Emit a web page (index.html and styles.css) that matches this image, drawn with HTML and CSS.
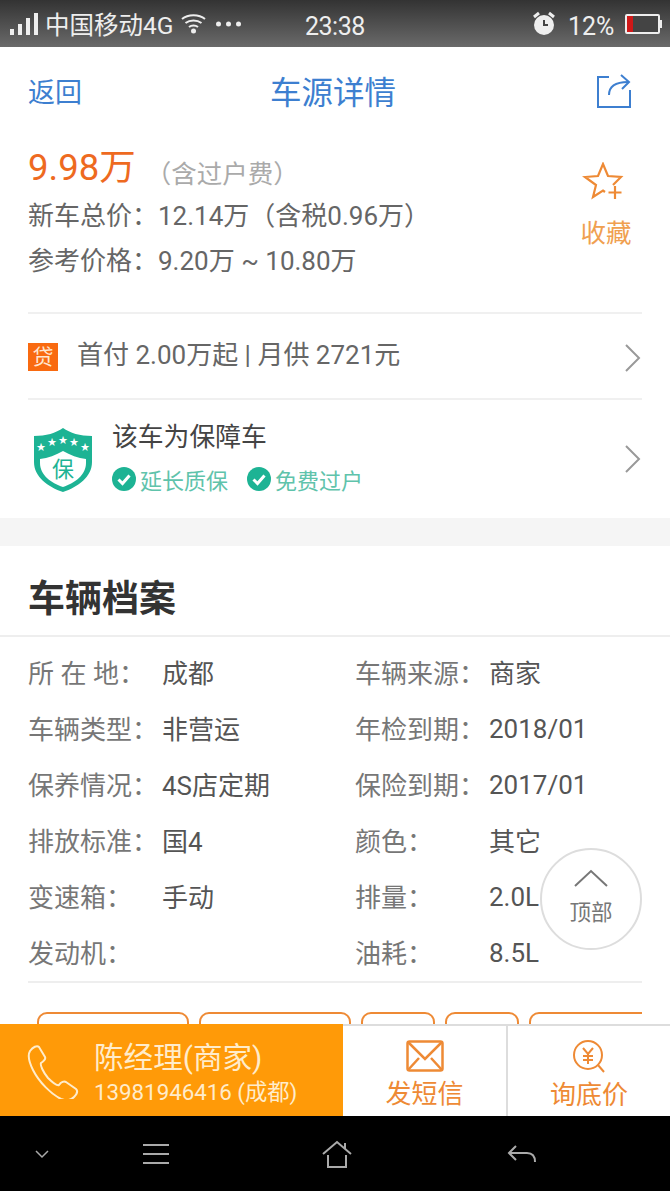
FILE: index.html
```html
<!DOCTYPE html>
<html lang="zh-CN">
<head>
    <meta charset="UTF-8">
    <meta name="viewport" content="width=device-width, initial-scale=1.0">
    <title>车源详情</title>
    <link rel="stylesheet" href="styles.css">
</head>
<body>
    <div class="screen">
        <div class="status-bar">
            <div class="status-left">
                <svg width="28" height="22" viewBox="0 0 28 22"><g fill="#eee"><rect x="0" y="16" width="4" height="6"/><rect x="8" y="11" width="4" height="11"/><rect x="16" y="5" width="4" height="17"/><rect x="24" y="0" width="4" height="22"/></g></svg>
                <span class="carrier">中国移动4G</span>
                <svg class="wifi" width="25" height="21" viewBox="0 0 25 21" fill="none" stroke="#eee" stroke-width="2"><path d="M1 6c6-5 17-5 23 0"/><path d="M4.500 10c4.500-3.500 11.500-3.500 16 0"/><path d="M8 14c2.500-2 6.500-2 9 0"/><circle cx="12.500" cy="18" r="2.500" fill="#eee" stroke="none"/></svg>
                <svg class="dots" width="25" height="6" viewBox="0 0 25 6" fill="#eee"><circle cx="2.500" cy="3" r="2.500"/><circle cx="12.500" cy="3" r="2.500"/><circle cx="22.500" cy="3" r="2.500"/></svg>
            </div>
            <span class="clock">23:38</span>
            <div class="status-right">
                <svg width="26" height="26" viewBox="0 0 26 26"><circle cx="13" cy="14" r="10" fill="#eee"/><path d="M3 6l5-4M23 6l-5-4" stroke="#eee" stroke-width="3"/><path d="M13 9v5h4" fill="none" stroke="#444" stroke-width="2"/></svg>
                <span class="battery-text">12%</span>
                <div class="battery"><div class="battery-level"></div></div>
            </div>
        </div>

        <div class="nav-bar">
            <span class="nav-back">返回</span>
            <span class="nav-title">车源详情</span>
            <svg class="nav-share" width="36" height="36" viewBox="0 0 36 36" fill="none" stroke="#3d7fd0" stroke-width="2"><path d="M13 4H2v30h32V17"/><path d="M13 22c0-8 6-13 19-13"/><path d="M25 2l8 7-7 7"/></svg>
        </div>

        <div class="price-box">
            <div class="price-info">
                <div class="price-main"><span class="price-num">9.98万</span><span class="price-note">（含过户费）</span></div>
                <div class="price-line">新车总价：12.14万（含税0.96万）</div>
                <div class="price-line">参考价格：9.20万 ~ 10.80万</div>
            </div>
            <div class="fav">
                <svg width="42" height="42" viewBox="0 0 42 42" fill="none" stroke="#ee8a35" stroke-width="2.200"><path d="M23 30l-2-1.500-10 6.500 3-12L3 15l13-1 5-12 5 12 13 1-8 8"/><path d="M33 24v13M26.500 30.500h13"/></svg>
                <span>收藏</span>
            </div>
        </div>

        <div class="list-row loan-row">
            <span class="loan-tag">贷</span>
            <span class="loan-text">首付 2.00万起 | 月供 2721元</span>
            <svg class="chevron" width="18" height="30" viewBox="0 0 18 30" fill="none" stroke="#999" stroke-width="2"><path d="M2 2l13 13L2 28"/></svg>
        </div>

        <div class="list-row guarantee-row">
            <svg class="shield" width="62" height="66" viewBox="0 0 62 66">
                <path d="M31 1C24 6 14 9 2 9v26c0 15 14 25 29 30 15-5 29-15 29-30V9C48 9 38 6 31 1z" fill="#1db394"/>
                <path d="M31 24c7 4 15 7 23 8v4c0 12-11 20-23 24C19 56 8 48 8 36v-4c8-1 16-4 23-8z" fill="#fff"/>
                <g fill="#fff" font-size="9" text-anchor="middle"><text x="9" y="23">★</text><text x="20" y="18">★</text><text x="31" y="16">★</text><text x="42" y="18">★</text><text x="53" y="23">★</text></g>
                <text class="shield-text" x="31" y="50" text-anchor="middle">保</text>
            </svg>
            <div class="guarantee-info">
                <div class="guarantee-title">该车为保障车</div>
                <div class="guarantee-items">
                    <span class="check-item"><svg width="24" height="24" viewBox="0 0 24 24"><circle cx="12" cy="12" r="12" fill="#1db394"/><path d="M6.500 12.500l4 4 7-8" fill="none" stroke="#fff" stroke-width="3"/></svg>延长质保</span>
                    <span class="check-item"><svg width="24" height="24" viewBox="0 0 24 24"><circle cx="12" cy="12" r="12" fill="#1db394"/><path d="M6.500 12.500l4 4 7-8" fill="none" stroke="#fff" stroke-width="3"/></svg>免费过户</span>
                </div>
            </div>
            <svg class="chevron" width="18" height="30" viewBox="0 0 18 30" fill="none" stroke="#999" stroke-width="2"><path d="M2 2l13 13L2 28"/></svg>
        </div>

        <div class="gap"></div>

        <div class="section-title">车辆档案</div>

        <div class="spec-grid">
            <span class="spec-key">所 在 地：</span><span class="spec-val">成都</span><span class="spec-key">车辆来源：</span><span class="spec-val">商家</span>
            <span class="spec-key">车辆类型：</span><span class="spec-val">非营运</span><span class="spec-key">年检到期：</span><span class="spec-val spec-num">2018/01</span>
            <span class="spec-key">保养情况：</span><span class="spec-val">4S店定期</span><span class="spec-key">保险到期：</span><span class="spec-val spec-num">2017/01</span>
            <span class="spec-key">排放标准：</span><span class="spec-val">国4</span><span class="spec-key">颜色：</span><span class="spec-val">其它</span>
            <span class="spec-key">变速箱：</span><span class="spec-val">手动</span><span class="spec-key">排量：</span><span class="spec-val spec-num">2.0L</span>
            <span class="spec-key">发动机：</span><span class="spec-val"></span><span class="spec-key">油耗：</span><span class="spec-val spec-num">8.5L</span>
        </div>

        <div class="tag-area">
            <div class="tags">
                <div class="tag tag-long"></div>
                <div class="tag tag-long"></div>
                <div class="tag tag-short"></div>
                <div class="tag tag-short"></div>
                <div class="tag tag-long"></div>
            </div>
        </div>

        <div class="contact-bar">
            <div class="contact-call">
                <svg class="call-icon" width="52" height="54" viewBox="0 0 52 54" fill="none" stroke="#ffeccb" stroke-width="2"><path d="M3 6c3-4 7-6 9-4l6 10c1 2-1 4-4 6-1 2 2 9 7 15 5 5 9 8 11 7 2-3 5-4 7-3l10 7c2 2 1 5-2 8-3 3-8 4-13 2C24 49 12 37 6 25 2 17 0 11 3 6z"/></svg>
                <div class="call-info">
                    <div class="call-name">陈经理(商家)</div>
                    <div class="call-phone">13981946416 (成都)</div>
                </div>
            </div>
            <div class="contact-btn btn-sms">
                <svg width="38" height="32" viewBox="0 0 38 32" fill="none" stroke="#ee8a35" stroke-width="2.500"><rect x="1.500" y="1.500" width="35" height="29" rx="2"/><path d="M2 2l17 17L36 2M2 30l11-12M36 30L25 18"/></svg>
                <span>发短信</span>
            </div>
            <div class="contact-btn btn-ask">
                <svg width="36" height="34" viewBox="0 0 36 34" fill="none" stroke="#ee8a35" stroke-width="2"><circle cx="17" cy="16" r="14"/><path d="M27 26l6 7"/><path d="M12 9l5 6 5-6M17 15v10M12 17h10M12 21h10"/></svg>
                <span>询底价</span>
            </div>
        </div>

        <div class="system-bar">
            <svg width="16" height="10" viewBox="0 0 16 10" fill="none" stroke="#aaa" stroke-width="1.500"><path d="M2 2l6 6 6-6"/></svg>
            <svg class="sys-menu" width="26" height="22" viewBox="0 0 26 22" fill="none" stroke="#aaa" stroke-width="2"><path d="M0 2h26M0 11h26M0 20h26"/></svg>
            <svg class="sys-home" width="30" height="28" viewBox="0 0 30 28" fill="none" stroke="#aaa" stroke-width="2"><path d="M1 14L15 2l14 12"/><path d="M6 15v12h18V15"/><path d="M23 3v6"/></svg>
            <svg class="sys-back" width="30" height="20" viewBox="0 0 30 20" fill="none" stroke="#aaa" stroke-width="2"><path d="M9 2L2 9l7 7"/><path d="M2 9h18c5 0 8 3 8 9"/></svg>
        </div>

        <div class="to-top">
            <svg width="34" height="18" viewBox="0 0 34 18" fill="none" stroke="#777" stroke-width="2"><path d="M1 17L17 2l16 15"/></svg>
            <span>顶部</span>
        </div>
    </div>
</body>
</html>
```

FILE: styles.css
```css
html, body {
    margin: 0;
    padding: 0;
}
body {
    font-family: Roboto, "Noto Sans CJK SC", sans-serif;
    background: #fff;
}
.screen {
    position: relative;
    width: 670px;
    height: 1191px;
    overflow: hidden;
    display: flex;
    flex-direction: column;
}
.status-bar {
    height: 47px;
    flex: none;
    box-sizing: border-box;
    padding: 0 0 0 10px;
    display: flex;
    align-items: center;
    background: linear-gradient(#333, #6a6a6a);
    color: #eee;
}
.status-left {
    display: flex;
    align-items: center;
    width: 295px;
}
.carrier {
    font-size: 24.500px;
    margin-left: 7px;
}
.wifi {
    margin-left: 8px;
}
.dots {
    margin-left: 10px;
}
.clock {
    font-size: 25px;
    letter-spacing: -0.500px;
    width: 226px;
    padding-top: 5px;
}
.status-right {
    display: flex;
    align-items: center;
    gap: 11px;
}
.battery-text {
    font-size: 25px;
    padding-top: 5px;
}
.battery {
    position: relative;
    width: 35px;
    height: 20px;
    border: 2px solid #eee;
    box-sizing: border-box;
    border-radius: 2px;
    background: #444;
}
.battery::after {
    content: "";
    position: absolute;
    left: 33px;
    top: 4px;
    width: 2px;
    height: 8px;
    background: #eee;
}
.battery-level {
    width: 6px;
    height: 100%;
    background: #d01818;
}

.nav-bar {
    height: 90px;
    flex: none;
    box-sizing: border-box;
    padding: 0 38px 4px 28px;
    display: flex;
    align-items: center;
    justify-content: space-between;
    color: #3d7fd0;
}
.nav-back {
    font-size: 27px;
}
.nav-title {
    font-size: 31.500px;
    margin-left: -12px;
}
.nav-share {
    margin-top: 2px;
}

.price-box {
    height: 177px;
    flex: none;
    box-sizing: border-box;
    margin: 0 28px;
    display: flex;
    justify-content: space-between;
    border-bottom: 2px solid #f0f0f0;
}
.price-main {
    height: 42px;
    display: flex;
    align-items: center;
    margin-top: 6px;
    margin-bottom: 9px;
}
.price-num {
    font-size: 36.500px;
    color: #ee6a1f;
}
.price-note {
    font-size: 25.500px;
    color: #aaa;
    margin-left: 10px;
    padding-top: 14px;
}
.price-line {
    font-size: 26px;
    line-height: 45px;
    color: #666;
}
.fav {
    width: 52px;
    margin-right: 10px;
    padding-top: 25px;
    display: flex;
    flex-direction: column;
    align-items: center;
    color: #f0a050;
    font-size: 25.500px;
    white-space: nowrap;
}
.fav svg {
    margin-right: 6px;
    margin-bottom: 8px;
}

.list-row {
    flex: none;
    box-sizing: border-box;
    margin: 0 28px;
    display: flex;
    align-items: center;
    position: relative;
}
.chevron {
    position: absolute;
    right: 0;
    top: 50%;
    margin-top: -13px;
}
.loan-row {
    height: 86px;
    border-bottom: 2px solid #f0f0f0;
}
.loan-tag {
    width: 30px;
    height: 28px;
    margin-top: 2px;
    background: #f96a10;
    color: #ffe6d0;
    font-size: 21px;
    line-height: 28px;
    text-align: center;
}
.loan-text {
    font-size: 26px;
    color: #666;
    margin-left: 19px;
    padding-bottom: 8px;
}
.guarantee-row {
    height: 118px;
    padding-left: 4px;
}
.guarantee-row .chevron {
    margin-top: -15px;
}
.shield {
    margin-top: 2px;
}
.shield-text {
    font-size: 22px;
    fill: #1db394;
}
.guarantee-info {
    margin-left: 18px;
    padding-bottom: 7px;
}
.guarantee-title {
    font-size: 25.800px;
    color: #444;
    margin-bottom: 10px;
}
.guarantee-items {
    display: flex;
    gap: 19px;
}
.check-item {
    display: flex;
    align-items: center;
    gap: 4px;
    font-size: 22px;
    color: #5fc3ab;
}

.gap {
    height: 28px;
    flex: none;
    background: #f5f5f5;
}

.section-title {
    height: 91px;
    flex: none;
    box-sizing: border-box;
    padding-left: 28px;
    line-height: 108px;
    font-size: 37px;
    font-weight: bold;
    color: #333;
    border-bottom: 2px solid #eee;
}

.spec-grid {
    flex: none;
    margin: 6px 28px 0;
    padding-bottom: 2px;
    border-bottom: 2px solid #eee;
    display: grid;
    grid-template-columns: 134px 193px 134px 1fr;
    grid-auto-rows: 56px;
    align-items: center;
    font-size: 26px;
}
.spec-key {
    color: #777;
}
.spec-val {
    color: #555;
}
.spec-num {
    padding-top: 4px;
}

.tag-area {
    flex: 1;
    min-height: 0;
    overflow: hidden;
    padding: 29px 28px 0 37px;
}
.tags {
    display: flex;
    gap: 10px;
    overflow: hidden;
}
.tag {
    flex: none;
    height: 40px;
    box-sizing: border-box;
    border: 2px solid #ee8a35;
    border-radius: 10px;
}
.tag-long {
    width: 152px;
}
.tag-short {
    width: 74px;
}

.contact-bar {
    height: 92px;
    flex: none;
    display: flex;
    background: #fff;
}
.contact-call {
    width: 343px;
    box-sizing: border-box;
    padding-left: 27px;
    display: flex;
    align-items: center;
    gap: 15px;
    background: #ff9a08;
    color: #fff;
}
.call-icon {
    margin-top: 4px;
}
.call-info {
    padding-top: 5px;
}
.call-name {
    font-size: 29.600px;
    line-height: 38px;
    color: #ffeccb;
}
.call-phone {
    font-size: 22.300px;
    line-height: 30px;
    color: #ffeccb;
}
.contact-btn {
    box-sizing: border-box;
    border-top: 2px solid #ddd;
    padding-top: 8px;
    display: flex;
    flex-direction: column;
    align-items: center;
    justify-content: center;
    gap: 1px;
    color: #ee8a35;
    font-size: 26px;
}
.btn-sms {
    width: 165px;
    border-right: 2px solid #ddd;
}
.btn-ask {
    width: 162px;
}

.system-bar {
    height: 75px;
    flex: none;
    box-sizing: border-box;
    padding-left: 34px;
    display: flex;
    align-items: center;
    background: #000;
}
.sys-menu {
    margin-left: 93px;
}
.sys-home {
    margin-left: 153px;
}
.sys-back {
    margin-left: 155px;
}

.to-top {
    position: absolute;
    left: 540px;
    top: 848px;
    width: 102px;
    height: 102px;
    box-sizing: border-box;
    padding-top: 19px;
    border: 2px solid #ddd;
    border-radius: 50%;
    background: rgba(255,255,255,0.9);
    display: flex;
    flex-direction: column;
    align-items: center;
    gap: 8px;
    font-size: 21.500px;
    color: #777;
}
```
